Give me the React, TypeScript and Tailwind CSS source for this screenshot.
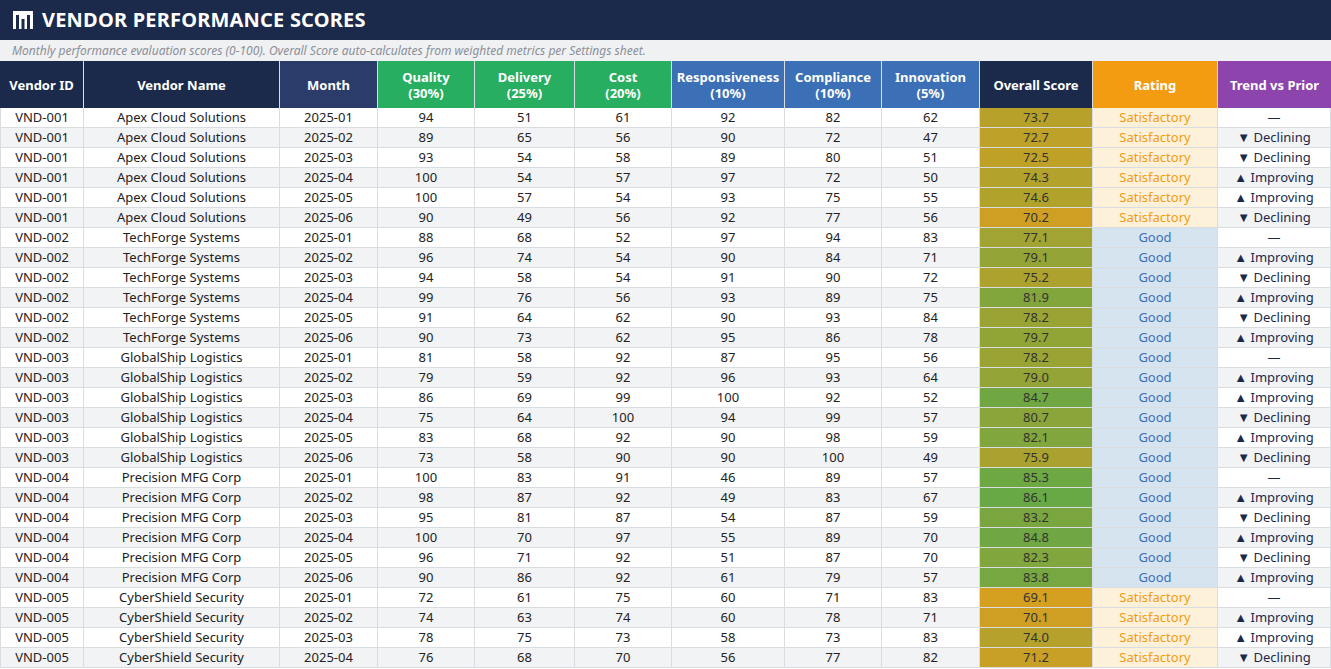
import React from "react";

type Row = [string, string, string, number, number, number, number, number, number, number, string];

const NAMES: Record<string, string> = {
  "VND-001": "Apex Cloud Solutions",
  "VND-002": "TechForge Systems",
  "VND-003": "GlobalShip Logistics",
  "VND-004": "Precision MFG Corp",
  "VND-005": "CyberShield Security",
};

const RAW: [string, string, number, number, number, number, number, number, number, string][] = [
  ["VND-001", "2025-01", 94, 51, 61, 92, 82, 62, 73.7, "—"],
  ["VND-001", "2025-02", 89, 65, 56, 90, 72, 47, 72.7, "down"],
  ["VND-001", "2025-03", 93, 54, 58, 89, 80, 51, 72.5, "down"],
  ["VND-001", "2025-04", 100, 54, 57, 97, 72, 50, 74.3, "up"],
  ["VND-001", "2025-05", 100, 57, 54, 93, 75, 55, 74.6, "up"],
  ["VND-001", "2025-06", 90, 49, 56, 92, 77, 56, 70.2, "down"],
  ["VND-002", "2025-01", 88, 68, 52, 97, 94, 83, 77.1, "—"],
  ["VND-002", "2025-02", 96, 74, 54, 90, 84, 71, 79.1, "up"],
  ["VND-002", "2025-03", 94, 58, 54, 91, 90, 72, 75.2, "down"],
  ["VND-002", "2025-04", 99, 76, 56, 93, 89, 75, 81.9, "up"],
  ["VND-002", "2025-05", 91, 64, 62, 90, 93, 84, 78.2, "down"],
  ["VND-002", "2025-06", 90, 73, 62, 95, 86, 78, 79.7, "up"],
  ["VND-003", "2025-01", 81, 58, 92, 87, 95, 56, 78.2, "—"],
  ["VND-003", "2025-02", 79, 59, 92, 96, 93, 64, 79.0, "up"],
  ["VND-003", "2025-03", 86, 69, 99, 100, 92, 52, 84.7, "up"],
  ["VND-003", "2025-04", 75, 64, 100, 94, 99, 57, 80.7, "down"],
  ["VND-003", "2025-05", 83, 68, 92, 90, 98, 59, 82.1, "up"],
  ["VND-003", "2025-06", 73, 58, 90, 90, 100, 49, 75.9, "down"],
  ["VND-004", "2025-01", 100, 83, 91, 46, 89, 57, 85.3, "—"],
  ["VND-004", "2025-02", 98, 87, 92, 49, 83, 67, 86.1, "up"],
  ["VND-004", "2025-03", 95, 81, 87, 54, 87, 59, 83.2, "down"],
  ["VND-004", "2025-04", 100, 70, 97, 55, 89, 70, 84.8, "up"],
  ["VND-004", "2025-05", 96, 71, 92, 51, 87, 70, 82.3, "down"],
  ["VND-004", "2025-06", 90, 86, 92, 61, 79, 57, 83.8, "up"],
  ["VND-005", "2025-01", 72, 61, 75, 60, 71, 83, 69.1, "—"],
  ["VND-005", "2025-02", 74, 63, 74, 60, 78, 71, 70.1, "up"],
  ["VND-005", "2025-03", 78, 75, 73, 58, 73, 83, 74.0, "up"],
  ["VND-005", "2025-04", 76, 68, 70, 56, 77, 82, 71.2, "down"],
];

const COLS = "grid-cols-[84px_196px_98px_97px_100px_97px_113px_97px_98px_113px_125px_113px]";

function scoreColor(v: number): string {
  const t = Math.max(0, Math.min(1, (v - 68) / 18));
  const r = Math.round(220 - t * 116);
  const g = Math.round(158 + t * 10);
  const b = Math.round(30 + t * 39);
  return `rgb(${r},${g},${b})`;
}

const cell = "flex items-center justify-center border-r border-b border-[#d9dce1] h-5";

export default function App() {
  return (
    <div className="w-[1331px] h-[669px] overflow-hidden bg-white font-['Liberation_Sans',Arial,sans-serif] text-[13px] text-[#222]">
      <div className="h-10 bg-[#1b2a4b] flex items-center gap-2 px-3">
        <svg width="22" height="20" viewBox="0 0 22 20">
          <rect x="1" y="1" width="20" height="18" fill="white" />
          <rect x="4" y="5" width="3" height="14" fill="#1b2a4b" />
          <rect x="9.5" y="9" width="3" height="10" fill="#1b2a4b" />
          <rect x="15" y="5" width="3" height="14" fill="#1b2a4b" />
        </svg>
        <div className="text-white font-bold text-[20px] tracking-[0.2px]">VENDOR PERFORMANCE SCORES</div>
      </div>
      <div className="h-[21px] bg-[#f0f1f3] flex items-center px-3 italic text-[12px] text-[#8a8f98]">
        Monthly performance evaluation scores (0-100). Overall Score auto-calculates from weighted metrics per Settings sheet.
      </div>
      <div className={`grid ${COLS} h-[47px] text-white font-bold text-[13px] leading-[16px] text-center`}>
        <div className="flex items-center justify-center bg-[#1b2a4b] border-r border-[#d9dce1]">Vendor ID</div>
        <div className="flex items-center justify-center bg-[#1b2a4b] border-r border-[#d9dce1]">Vendor Name</div>
        <div className="flex items-center justify-center bg-[#2b3c6b] border-r border-[#d9dce1]">Month</div>
        <div className="flex items-center justify-center bg-[#27ae60] border-r border-[#d9dce1]">Quality<br />(30%)</div>
        <div className="flex items-center justify-center bg-[#27ae60] border-r border-[#d9dce1]">Delivery<br />(25%)</div>
        <div className="flex items-center justify-center bg-[#27ae60] border-r border-[#d9dce1]">Cost<br />(20%)</div>
        <div className="flex items-center justify-center bg-[#3b6fb6] border-r border-[#d9dce1]">Responsiveness<br />(10%)</div>
        <div className="flex items-center justify-center bg-[#3b6fb6] border-r border-[#d9dce1]">Compliance<br />(10%)</div>
        <div className="flex items-center justify-center bg-[#3b6fb6] border-r border-[#d9dce1]">Innovation<br />(5%)</div>
        <div className="flex items-center justify-center bg-[#1b2a4b] border-r border-[#d9dce1]">Overall Score</div>
        <div className="flex items-center justify-center bg-[#f39c12] border-r border-[#d9dce1]">Rating</div>
        <div className="flex items-center justify-center bg-[#8e44ad]">Trend vs Prior</div>
      </div>
      {RAW.map((r, i) => {
        const bg = i % 2 === 0 ? "bg-white" : "bg-[#f2f3f5]";
        const good = r[8] >= 75;
        return (
          <div key={i} className={`grid ${COLS} ${bg}`}>
            <div className={`${cell} border-l`}>{r[0]}</div>
            <div className={cell}>{NAMES[r[0]]}</div>
            <div className={cell}>{r[1]}</div>
            {[r[2], r[3], r[4], r[5], r[6], r[7]].map((v, j) => (
              <div key={j} className={cell}>{v}</div>
            ))}
            <div className={`${cell} text-[#333]`} style={{ backgroundColor: scoreColor(r[8]) }}>{r[8].toFixed(1)}</div>
            {good ? (
              <div className={`${cell} bg-[#d6e4f0] text-[#3d6fb8]`}>Good</div>
            ) : (
              <div className={`${cell} bg-[#fdf2d9] text-[#f39c12]`}>Satisfactory</div>
            )}
            <div className={`${cell} text-[#1b2a4b]`}>
              {r[9] === "—" ? "—" : r[9] === "up" ? "▲ Improving" : "▼ Declining"}
            </div>
          </div>
        );
      })}
    </div>
  );
}
